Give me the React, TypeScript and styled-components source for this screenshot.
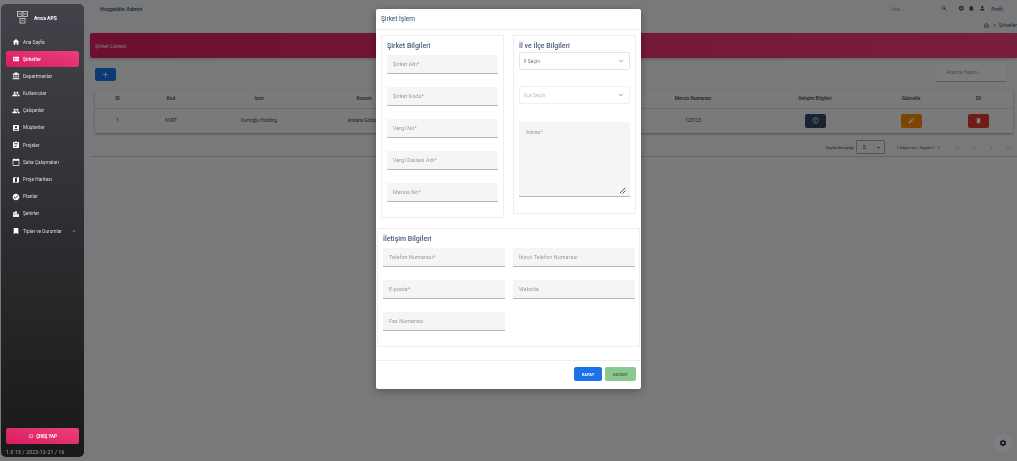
import React from 'react';
import styled, { createGlobalStyle } from 'styled-components';
import {
  MdHome, MdViewList, MdAccountBalance, MdPeople, MdAccountBox, MdAssignment, MdCalendarToday, MdMap,
  MdCheckCircle, MdLocationCity, MdBookmark, MdExpandMore, MdPowerSettingsNew, MdSearch, MdSettings,
  MdNotifications, MdPerson, MdAdd, MdInfoOutline, MdEdit, MdDelete, MdChevronRight, MdFirstPage,
  MdLastPage, MdChevronLeft, MdArrowDropDown, MdOutlineHome,
} from 'react-icons/md';

const GlobalStyle = createGlobalStyle`
  html, body {
    margin: 0;
    height: 100%;
    overflow: hidden;
    background: #f0f2f5;
    font-family: Roboto, "Liberation Sans", sans-serif;
  }
  * { box-sizing: border-box; }
`;

const Page = styled.div`
  display: flex;
  width: 1017px;
  height: 461px;
  overflow: hidden;
`;

const Sidebar = styled.aside`
  position: relative;
  z-index: 3;
  flex: 0 0 83px;
  margin: 4px 0 4px 1px;
  border-radius: 5px;
  background: linear-gradient(180deg, #42424a 0%, #191919 100%);
  display: flex;
  flex-direction: column;
  color: #fff;
`;

const Brand = styled.div`
  height: 27px;
  display: flex;
  align-items: center;
  gap: 6px;
  padding-left: 16px;
  font-size: 5px;
  font-weight: 700;
`;

const Nav = styled.nav`
  display: flex;
  flex-direction: column;
  gap: 1.2px;
  margin-top: 3px;
`;

const NavItem = styled.div<{ $active?: boolean }>`
  height: 16px;
  margin: 0 5px;
  padding-left: 5.5px;
  display: flex;
  align-items: center;
  gap: 3.5px;
  border-radius: 2px;
  font-size: 4.8px;
  white-space: nowrap;
  color: ${(p) => (p.$active ? '#fff' : '#dcdcdc')};
  font-weight: ${(p) => (p.$active ? 500 : 400)};
  background: ${(p) => (p.$active ? 'linear-gradient(195deg, #ec407a, #d81b60)' : 'transparent')};
  svg { font-size: 8px; color: #fff; flex: none; }
  svg:last-child:not(:first-child) { margin-left: auto; margin-right: 2px; font-size: 6px; color: #aaa; }
`;

const SideFoot = styled.div`
  margin-top: auto;
  padding: 0 5px 2px;
  display: flex;
  flex-direction: column;
  gap: 5px;
`;

const Logout = styled.div`
  height: 16px;
  border-radius: 2px;
  background: linear-gradient(195deg, #ec407a, #d81b60);
  display: flex;
  align-items: center;
  justify-content: center;
  gap: 2px;
  font-size: 4.5px;
  font-weight: 700;
  svg { font-size: 6px; }
`;

const Version = styled.div`
  font-size: 5px;
  color: #a8a8a8;
  letter-spacing: 0.2px;
`;

const Main = styled.main`
  flex: 1;
  min-width: 0;
  padding: 0 0 0 6px;
  display: flex;
  flex-direction: column;
  overflow: hidden;
`;

const TopBar = styled.div`
  height: 17px;
  display: flex;
  align-items: center;
  padding: 0 14px 0 10px;
  font-size: 5.5px;
  color: #344767;
`;

const Welcome = styled.div`
  font-weight: 500;
  flex: 1;
`;

const TopSearch = styled.span`
  color: #999;
  font-size: 5px;
  margin-right: 38px;
`;

const TopIcons = styled.div`
  display: flex;
  align-items: center;
  gap: 4px;
  color: #444;
  font-size: 5px;
  svg { font-size: 6.5px; }
  svg:first-child { margin-right: 6px; }
`;

const Profile = styled.span`
  display: inline-flex;
  align-items: center;
`;

const Crumbs = styled.div`
  height: 16px;
  display: flex;
  align-items: center;
  justify-content: flex-end;
  gap: 1px;
  font-size: 5px;
  color: #555;
  white-space: nowrap;
  svg { font-size: 7px; }
`;

const Banner = styled.div`
  height: 25px;
  border-radius: 2px 0 0 2px;
  background: linear-gradient(90deg, #dc1f63, #f03f7c);
  display: flex;
  align-items: center;
  padding-left: 5px;
  font-size: 5.5px;
  color: #eee;
  box-shadow: 0 1px 3px rgba(0, 0, 0, 0.2);
`;

const Panel = styled.div`
  height: 99px;
  padding: 10px 0 0 5px;
  border-bottom: 1px solid #ccc;
`;

const Tools = styled.div`
  display: flex;
  justify-content: space-between;
  align-items: flex-start;
  height: 22px;
`;

const AddButton = styled.div`
  width: 21px;
  height: 13px;
  background: #1a73e8;
  border-radius: 2px;
  display: flex;
  align-items: center;
  justify-content: center;
  color: #fff;
  font-size: 9px;
`;

const SearchBox = styled.div`
  width: 71px;
  height: 19px;
  margin: -5px 11px 0 0;
  padding-left: 11px;
  background: #f8f8f8;
  border-bottom: 1px solid #bbb;
  display: flex;
  align-items: center;
  font-size: 5.5px;
  color: #999;
`;

const Table = styled.table`
  width: 918px;
  border-collapse: collapse;
  table-layout: fixed;
  background: #f5f5f5;
  box-shadow: 0 1px 2px rgba(0, 0, 0, 0.35);
  font-size: 4.8px;
  color: #444;
`;

const Head = styled.th`
  height: 18px;
  font-weight: 500;
  border-bottom: 1px solid #ddd;
`;

const Cell = styled.td`
  height: 25px;
  text-align: center;
  padding: 0;
  white-space: nowrap;
`;

const ActionButton = styled.div<{ $bg: string }>`
  width: 21px;
  height: 14px;
  margin: 0 auto;
  border-radius: 2px;
  background: ${(p) => p.$bg};
  display: flex;
  align-items: center;
  justify-content: center;
  color: #fff;
  font-size: 7px;
`;

const Pager = styled.div`
  display: flex;
  align-items: center;
  justify-content: flex-end;
  gap: 12px;
  margin: 7px 5.5px 0 0;
  font-size: 4.3px;
  color: #444;
  height: 14px;
`;

const PageSize = styled.span`
  display: inline-flex;
  align-items: center;
  gap: 2px;
`;

const SizeBox = styled.span`
  width: 29px;
  height: 14px;
  padding: 0 2px 0 6px;
  border: 1px solid #aaa;
  border-radius: 1px;
  display: inline-flex;
  align-items: center;
  justify-content: space-between;
  font-size: 5px;
  svg { font-size: 7px; }
`;

const PagerIcons = styled.span`
  display: inline-flex;
  gap: 10px;
  margin-left: 1.5px;
  color: #bbb;
  font-size: 7px;
`;

const Backdrop = styled.div`
  position: fixed;
  inset: 0;
  z-index: 2;
  background: rgba(0, 0, 0, 0.5);
`;

const Fab = styled.div`
  position: fixed;
  z-index: 1;
  right: 5px;
  bottom: 9px;
  width: 18px;
  height: 18px;
  border-radius: 50%;
  background: #fff;
  display: flex;
  align-items: center;
  justify-content: center;
  font-size: 8px;
  color: #1b2a4a;
`;

const Modal = styled.div`
  position: fixed;
  z-index: 4;
  left: 376px;
  top: 9px;
  width: 265px;
  height: 380px;
  background: #fff;
  border-radius: 2px;
  display: flex;
  flex-direction: column;
  box-shadow: 0 2px 8px rgba(0, 0, 0, 0.3);
`;

const ModalTitle = styled.div`
  height: 21px;
  padding-left: 5px;
  display: flex;
  align-items: center;
  font-size: 6.5px;
  color: #344767;
  border-bottom: 1px solid #eee;
`;

const TopCards = styled.div`
  display: grid;
  grid-template-columns: 123px 123px;
  justify-content: space-between;
  align-items: start;
  padding: 5px 5px 0;
  height: 198px;
`;

const Card = styled.section<{ $h: number }>`
  height: ${(p) => p.$h}px;
  border: 1px solid #eee;
  padding: 5px;
`;

const CardTitle = styled.h4`
  margin: 0;
  height: 10px;
  font-size: 7px;
  line-height: 10px;
  font-weight: 500;
  color: #4a5a7a;
`;

const Stack = styled.div`
  margin-top: 4px;
  display: flex;
  flex-direction: column;
  gap: 13px;
`;

const Field = styled.div`
  height: 19px;
  padding-left: 6px;
  background: #f5f5f5;
  border-bottom: 1px solid #b5b5b5;
  display: flex;
  align-items: center;
  font-size: 5.3px;
  letter-spacing: 0.15px;
  color: #999;
`;

const SelectStack = styled.div`
  margin-top: 1px;
  display: flex;
  flex-direction: column;
  gap: 16px;
`;

const Select = styled.div<{ $muted?: boolean }>`
  height: 18px;
  padding: 0 4px;
  border: 1px solid ${(p) => (p.$muted ? '#f0f0f0' : '#e4e4e8')};
  border-radius: 2px;
  display: flex;
  align-items: center;
  justify-content: space-between;
  font-size: 5px;
  color: ${(p) => (p.$muted ? '#bbb' : '#777')};
  svg { font-size: 8px; color: #888; }
`;

const AddressBox = styled.div`
  position: relative;
  height: 75px;
  margin-top: 18px;
  padding: 7px;
  background: #f5f5f5;
  border-bottom: 1px solid #b5b5b5;
  font-size: 5.3px;
  letter-spacing: 0.15px;
  color: #999;
`;

const ResizeGrip = styled.svg`
  position: absolute;
  right: 4px;
  bottom: 2px;
  width: 7px;
  height: 7px;
`;

const ContactCard = styled.section`
  height: 119px;
  margin: 0 1px;
  border: 1px solid #eee;
  padding: 5px;
`;

const ContactGrid = styled.div`
  margin-top: 4px;
  display: grid;
  grid-template-columns: 122px 122px;
  column-gap: 8px;
  row-gap: 13px;
`;

const Footer = styled.div`
  margin-top: 13px;
  flex: 1;
  border-top: 1px solid #eee;
  display: flex;
  justify-content: flex-end;
  gap: 3px;
  padding: 6px 5px 0 0;
`;

const FootButton = styled.div<{ $save?: boolean }>`
  width: ${(p) => (p.$save ? 31 : 28)}px;
  height: 14px;
  border-radius: 2px;
  background: ${(p) => (p.$save ? '#8bc78e' : '#1a73e8')};
  color: ${(p) => (p.$save ? '#3f6b42' : '#fff')};
  display: flex;
  align-items: center;
  justify-content: center;
  font-size: 4px;
  font-weight: 700;
`;

const menu = [
  { label: 'Ana Sayfa', icon: MdHome },
  { label: 'Şirketler', icon: MdViewList, active: true },
  { label: 'Departmanlar', icon: MdAccountBalance },
  { label: 'Kullanıcılar', icon: MdPeople },
  { label: 'Çalışanlar', icon: MdPeople },
  { label: 'Müşteriler', icon: MdAccountBox },
  { label: 'Projeler', icon: MdAssignment },
  { label: 'Saha Çalışmaları', icon: MdCalendarToday },
  { label: 'Proje Haritası', icon: MdMap },
  { label: 'Planlar', icon: MdCheckCircle },
  { label: 'Şehirler', icon: MdLocationCity },
];

const columns: [string, number][] = [
  ['ID', 45], ['Kod', 62], ['İsim', 114], ['Konum', 96], ['', 222],
  ['Mersis Numarası', 118], ['İletişim Bilgileri', 126], ['Güncelle', 66], ['Sil', 69],
];

const LogoMark = () => (
  <svg width="11" height="13" viewBox="0 0 22 26" fill="none" stroke="#ddd" strokeWidth="1.5">
    <rect x="1" y="1" width="9" height="10" />
    <rect x="12" y="1" width="9" height="10" />
    <rect x="6" y="15" width="10" height="9" />
    <path d="M3 6h5M14 6h5M9 19h4" />
  </svg>
);

export default function App() {
  return (
    <Page>
      <GlobalStyle />
      <Sidebar>
        <Brand>
          <LogoMark />
          Arıca APS
        </Brand>
        <Nav>
          {menu.map((m) => (
            <NavItem key={m.label} $active={m.active}>
              <m.icon />
              {m.label}
            </NavItem>
          ))}
          <NavItem>
            <MdBookmark />
            Tipler ve Durumlar
            <MdExpandMore />
          </NavItem>
        </Nav>
        <SideFoot>
          <Logout>
            <MdPowerSettingsNew />
            ÇIKIŞ YAP
          </Logout>
          <Version>1.0.15 / 2023-12-21 / 16</Version>
        </SideFoot>
      </Sidebar>
      <Main>
        <TopBar>
          <Welcome>Hoşgeldin Admin</Welcome>
          <TopSearch>Ara...</TopSearch>
          <TopIcons>
            <MdSearch />
            <MdSettings />
            <MdNotifications />
            <Profile>
              <MdPerson />
              Profil
            </Profile>
          </TopIcons>
        </TopBar>
        <Crumbs>
          <MdOutlineHome />
          <MdChevronRight />
          Şirketler
        </Crumbs>
        <Banner>Şirket Listesi</Banner>
        <Panel>
          <Tools>
            <AddButton>
              <MdAdd />
            </AddButton>
            <SearchBox>Arama Yapın...</SearchBox>
          </Tools>
          <Table>
            <colgroup>
              {columns.map(([, w], i) => (
                <col key={i} width={w} />
              ))}
            </colgroup>
            <thead>
              <tr>
                {columns.map(([name], i) => (
                  <Head key={i}>{name}</Head>
                ))}
              </tr>
            </thead>
            <tbody>
              <tr>
                <Cell>1</Cell>
                <Cell>KURT</Cell>
                <Cell>Kurtoğlu Holding</Cell>
                <Cell>Ankara/Gölbaşı</Cell>
                <Cell />
                <Cell>123123</Cell>
                <Cell>
                  <ActionButton $bg="#344767">
                    <MdInfoOutline />
                  </ActionButton>
                </Cell>
                <Cell>
                  <ActionButton $bg="#fb8c00">
                    <MdEdit />
                  </ActionButton>
                </Cell>
                <Cell>
                  <ActionButton $bg="#e53935">
                    <MdDelete />
                  </ActionButton>
                </Cell>
              </tr>
            </tbody>
          </Table>
          <Pager>
            <PageSize>
              Sayfa Genişliği
              <SizeBox>
                5
                <MdArrowDropDown />
              </SizeBox>
            </PageSize>
            <span>1 kayıt var / Sayfa 1 - 1</span>
            <PagerIcons>
              <MdFirstPage />
              <MdChevronLeft />
              <MdChevronRight />
              <MdLastPage />
            </PagerIcons>
          </Pager>
        </Panel>
      </Main>
      <Fab>
        <MdSettings />
      </Fab>
      <Backdrop />
      <Modal>
        <ModalTitle>Şirket İşlem</ModalTitle>
        <TopCards>
          <Card $h={183}>
            <CardTitle>Şirket Bilgileri</CardTitle>
            <Stack>
              <Field>Şirket Adı*</Field>
              <Field>Şirket Kodu*</Field>
              <Field>Vergi No*</Field>
              <Field>Vergi Dairesi Adı*</Field>
              <Field>Mersis No*</Field>
            </Stack>
          </Card>
          <Card $h={179}>
            <CardTitle>İl ve İlçe Bilgileri</CardTitle>
            <SelectStack>
              <Select>
                İl Seçin
                <MdExpandMore />
              </Select>
              <Select $muted>
                İlçe Seçin
                <MdExpandMore />
              </Select>
            </SelectStack>
            <AddressBox>
              Adres*
              <ResizeGrip viewBox="0 0 7 7" stroke="#333" strokeWidth="0.8">
                <path d="M1 6L6 1M3.5 6.5L6.5 3.5" />
              </ResizeGrip>
            </AddressBox>
          </Card>
        </TopCards>
        <ContactCard>
          <CardTitle>İletişim Bilgileri</CardTitle>
          <ContactGrid>
            <Field>Telefon Numarası*</Field>
            <Field>İkinci Telefon Numarası</Field>
            <Field>E-posta*</Field>
            <Field>Website</Field>
            <Field>Fax Numarası</Field>
          </ContactGrid>
        </ContactCard>
        <Footer>
          <FootButton>KAPAT</FootButton>
          <FootButton $save>KAYDET</FootButton>
        </Footer>
      </Modal>
    </Page>
  );
}
